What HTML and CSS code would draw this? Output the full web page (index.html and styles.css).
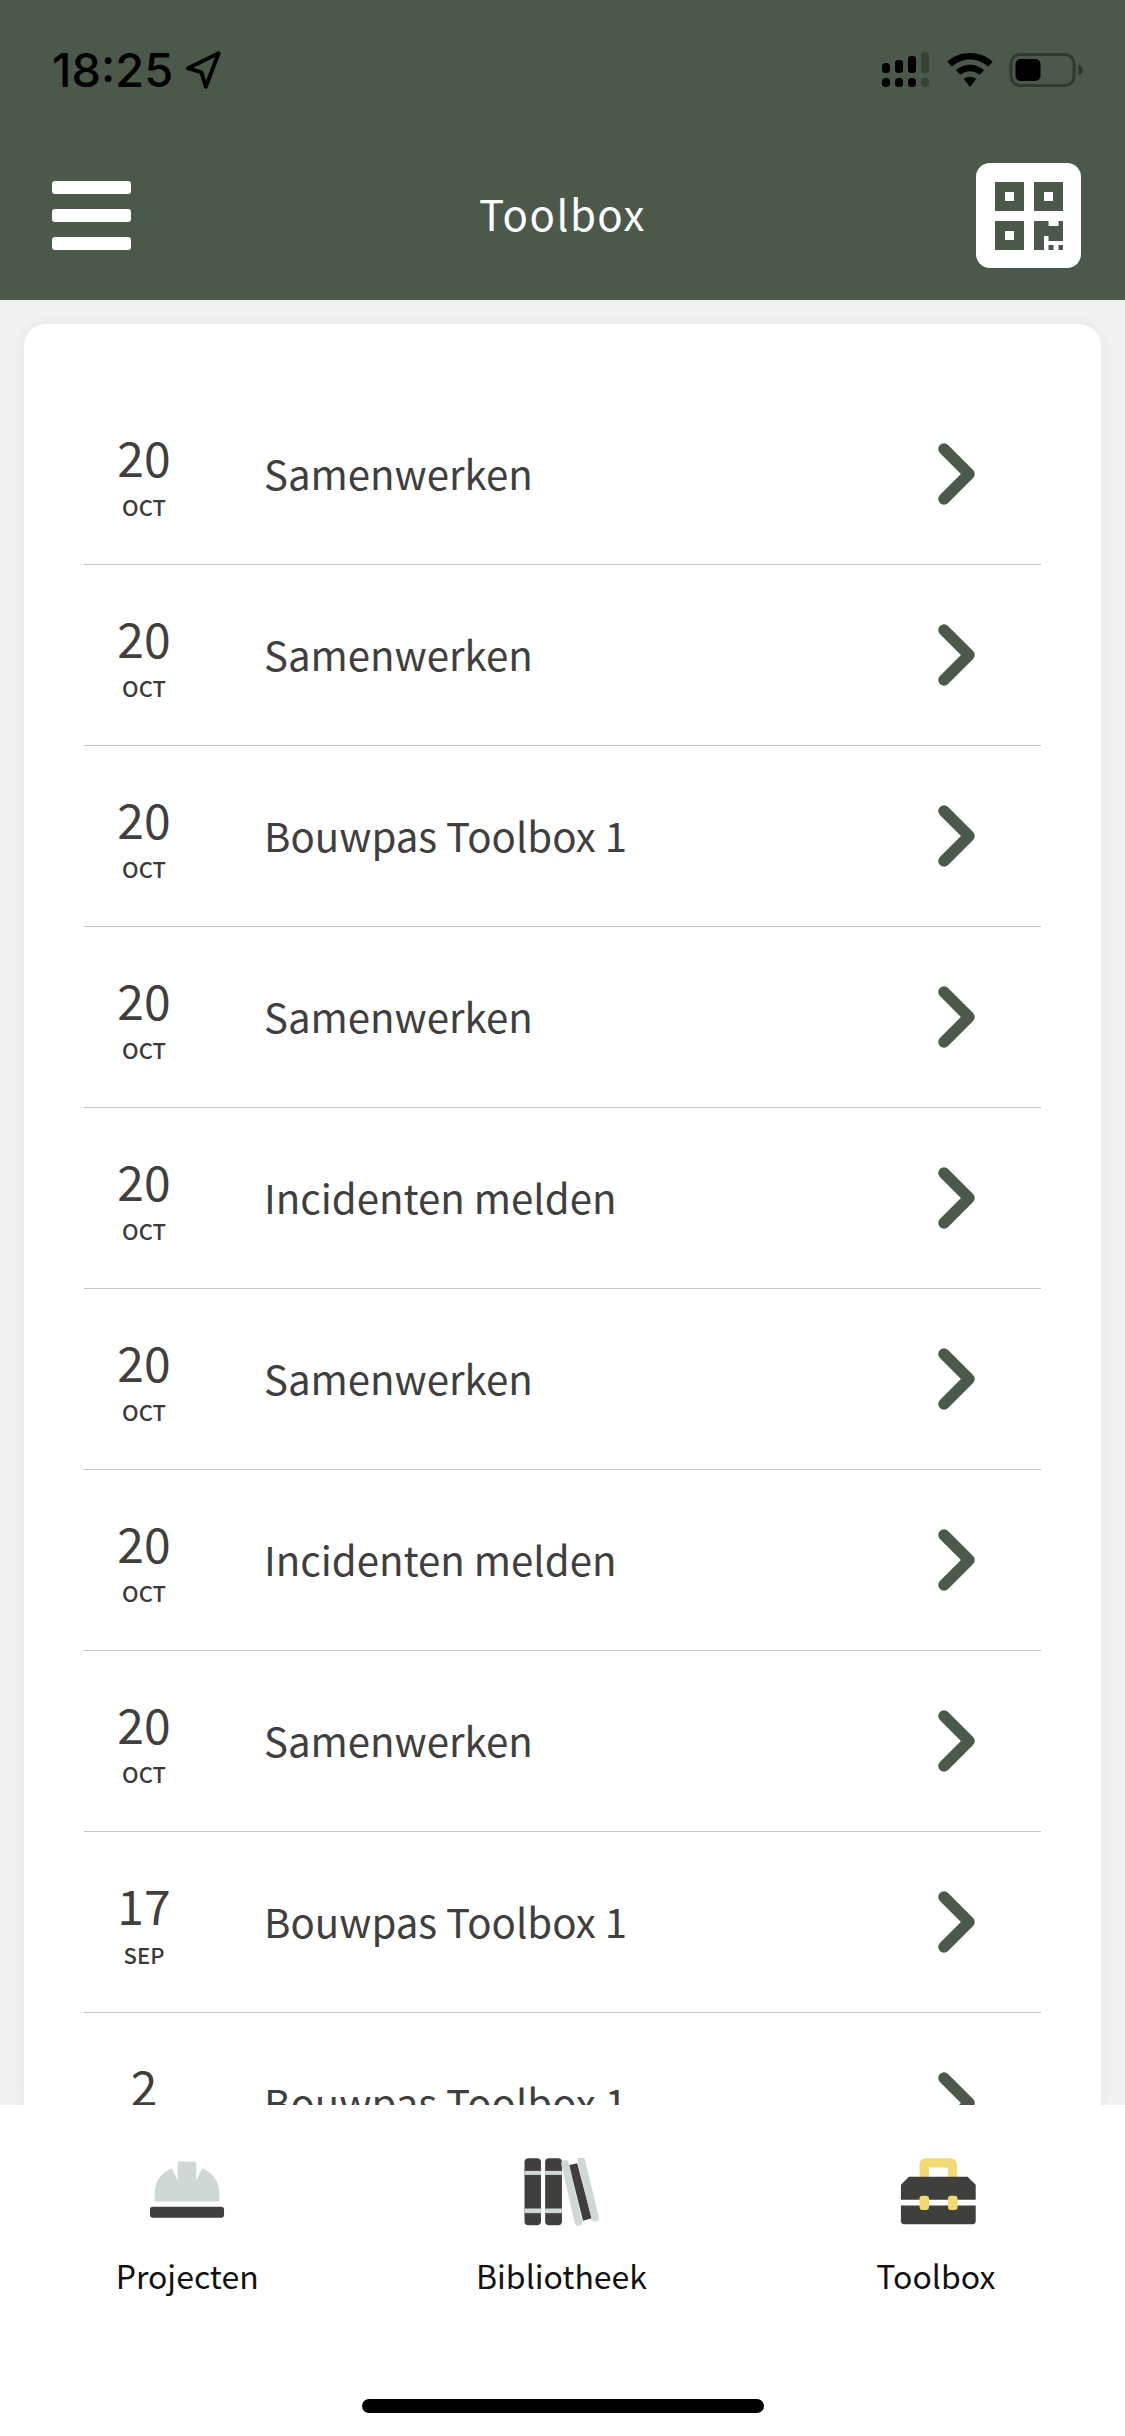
FILE: index.html
```html
<!DOCTYPE html>
<html lang="nl">
<head>
<meta charset="utf-8">
<title>Toolbox</title>
<link rel="stylesheet" href="styles.css">
</head>
<body>
<div class="app">
  <header class="header">
    <div class="status">
      <div class="status-left">
        <span class="time">18:25</span>
        <svg class="loc" viewBox="0 0 32 34"><path d="M30 2 2.500 15.500 14.500 18.800 18.500 32Z" fill="none" stroke="#000" stroke-width="3.500" stroke-linejoin="round"/></svg>
      </div>
      <div class="status-right">
        <svg class="signal" viewBox="0 0 48 36"><rect x="0" y="11" width="8" height="10" rx="3.500"/><rect x="13" y="8" width="8" height="13" rx="3"/><rect x="26" y="4" width="8" height="17" rx="3"/><rect x="39" y="0" width="8" height="21" rx="3" opacity=".25"/><rect x="0" y="26" width="8" height="9" rx="3.500"/><rect x="13" y="26" width="8" height="9" rx="3.500"/><rect x="26" y="26" width="8" height="9" rx="3.500"/><rect x="39" y="26" width="8" height="9" rx="3.500" opacity=".25"/></svg>
        <svg class="wifi" viewBox="0 0 46 34"><path d="M23 0C14.500 0 6.800 3.200 1 8.500L5.500 13C10.200 8.800 16.300 6.200 23 6.200S35.800 8.800 40.500 13L45 8.500C39.200 3.200 31.500 0 23 0Z"/><path d="M23 11.500C17.700 11.500 13 13.500 9.300 16.800L13.700 21.200C16.200 19 19.400 17.700 23 17.700S29.800 19 32.300 21.200L36.700 16.800C33 13.500 28.300 11.500 23 11.500Z"/><path d="M23 23C20.600 23 18.700 23.800 17 25.200L23 33 29 25.200C27.300 23.800 25.400 23 23 23Z"/></svg>
        <svg class="battery" viewBox="0 0 74 34"><rect x="1.500" y="1.500" width="63" height="31" rx="9" fill="none" stroke="#000" stroke-opacity=".35" stroke-width="3"/><rect x="6" y="6" width="25" height="22" rx="5"/><path d="M69 11.500C71.500 12.500 73 14.500 73 17S71.500 21.500 69 22.500Z" opacity=".4"/></svg>
      </div>
    </div>
    <div class="navbar">
      <div class="burger"><span></span><span></span><span></span></div>
      <h1 class="title">Toolbox</h1>
      <div class="qr">
        <svg viewBox="0 0 68 68" width="68" height="68"><path fill-rule="evenodd" fill="#4a5949" d="M0 0H29V29H0ZM10 10V19H19V10ZM39 0H68V29H39ZM49 10V19H58V10ZM0 39H29V68H0ZM10 49V58H19V49Z"/><path fill="#4a5949" d="M39 39H53.500V44H63.500V39H68V59H53.500V54H49V68H39ZM53.500 63H58.500V68H53.500ZM63.500 63H68V68H63.500Z"/></svg>
      </div>
    </div>
  </header>
  <main class="main">
    <section class="card">
      <ul class="list">
        <li class="row"><div class="date"><span class="day">20</span><span class="month">OCT</span></div><span class="name">Samenwerken</span><svg class="chev" viewBox="0 0 38 62"><path d="M6 6 31 31 6 56" /></svg></li>
        <li class="row"><div class="date"><span class="day">20</span><span class="month">OCT</span></div><span class="name">Samenwerken</span><svg class="chev" viewBox="0 0 38 62"><path d="M6 6 31 31 6 56" /></svg></li>
        <li class="row"><div class="date"><span class="day">20</span><span class="month">OCT</span></div><span class="name">Bouwpas Toolbox 1</span><svg class="chev" viewBox="0 0 38 62"><path d="M6 6 31 31 6 56" /></svg></li>
        <li class="row"><div class="date"><span class="day">20</span><span class="month">OCT</span></div><span class="name">Samenwerken</span><svg class="chev" viewBox="0 0 38 62"><path d="M6 6 31 31 6 56" /></svg></li>
        <li class="row"><div class="date"><span class="day">20</span><span class="month">OCT</span></div><span class="name">Incidenten melden</span><svg class="chev" viewBox="0 0 38 62"><path d="M6 6 31 31 6 56" /></svg></li>
        <li class="row"><div class="date"><span class="day">20</span><span class="month">OCT</span></div><span class="name">Samenwerken</span><svg class="chev" viewBox="0 0 38 62"><path d="M6 6 31 31 6 56" /></svg></li>
        <li class="row"><div class="date"><span class="day">20</span><span class="month">OCT</span></div><span class="name">Incidenten melden</span><svg class="chev" viewBox="0 0 38 62"><path d="M6 6 31 31 6 56" /></svg></li>
        <li class="row"><div class="date"><span class="day">20</span><span class="month">OCT</span></div><span class="name">Samenwerken</span><svg class="chev" viewBox="0 0 38 62"><path d="M6 6 31 31 6 56" /></svg></li>
        <li class="row"><div class="date"><span class="day">17</span><span class="month">SEP</span></div><span class="name">Bouwpas Toolbox 1</span><svg class="chev" viewBox="0 0 38 62"><path d="M6 6 31 31 6 56" /></svg></li>
        <li class="row"><div class="date"><span class="day">2</span><span class="month">SEP</span></div><span class="name">Bouwpas Toolbox 1</span><svg class="chev" viewBox="0 0 38 62"><path d="M6 6 31 31 6 56" /></svg></li>
      </ul>
    </section>
  </main>
  <nav class="tabbar">
    <div class="tabs">
      <div class="tab">
        <svg class="tab-icon" viewBox="0 0 76 68"><path fill="#cfd9d4" d="M30 5C30 3.500 31 3 32 3H44C45 3 46 3.500 46 5V19L51 9C60 12 66 20 66 31V37.500H10V31C10 20 16 12 25 9L30 19Z"/><rect x="6" y="42" width="64" height="9.500" rx="2.500" fill="#3f3f3d"/></svg>
        <span class="tab-label">Projecten</span>
      </div>
      <div class="tab">
        <svg class="tab-icon" viewBox="-2 0 76 68"><rect x="4.500" y="0" width="14.200" height="58" rx="3.500" fill="#3f3f3d"/><rect x="22.300" y="0" width="14.500" height="58" rx="3.500" fill="#3f3f3d"/><rect x="4.500" y="11" width="14.200" height="3.500" fill="#cfd9d4"/><rect x="22.300" y="11" width="14.500" height="3.500" fill="#cfd9d4"/><rect x="4.500" y="43.500" width="14.200" height="4" fill="#cfd9d4"/><rect x="22.300" y="43.500" width="14.500" height="4" fill="#cfd9d4"/><path d="M43 6 50 4.500 62.500 52 55 54Z" fill="#3f3f3d"/><path d="M39.500 5 51 55M53.500 2 65.500 51.500" stroke="#cfd9d4" stroke-width="6.500" stroke-linecap="round" fill="none"/></svg>
        <span class="tab-label">Bibliotheek</span>
      </div>
      <div class="tab">
        <svg class="tab-icon" viewBox="-2 0 76 68"><path d="M21.800 17V6C21.800 2 24 0 28 0H48C52 0 54.200 2 54.200 6V17H46.300V8H29.900V17Z" fill="#f2d974"/><path d="M12.700 16H63.300L70.300 23V36H5.700V23Z" fill="#3f3f3d"/><path d="M5.700 41H70.300V54.500C70.300 56 69.300 57 67.800 57H8.200C6.700 57 5.700 56 5.700 54.500Z" fill="#3f3f3d"/><rect x="21.800" y="32.400" width="8.200" height="12.400" rx="2.500" fill="#f2d974"/><rect x="46.300" y="32.400" width="8.300" height="12.400" rx="2.500" fill="#f2d974"/></svg>
        <span class="tab-label">Toolbox</span>
      </div>
    </div>
    <div class="home"></div>
  </nav>
</div>
</body>
</html>
```
FILE: styles.css
```css
* { box-sizing: border-box; margin: 0; padding: 0; }
html, body { width: 1125px; height: 2436px; overflow: hidden; background: #f1f1f1; }
body { font-family: "Noto Sans CJK SC", "Noto Sans", sans-serif; color: #3a3a3a; }
.app { width: 1125px; height: 2436px; display: flex; flex-direction: column; }

.header { height: 300px; background: #4a5949; flex: none; }
.status { height: 132px; padding: 46px 41px 0 52px; display: flex; justify-content: space-between; align-items: flex-start; }
.status-left { display: flex; align-items: center; gap: 12px; }
.time { font-family: Inter, "Liberation Sans", sans-serif; font-size: 47px; font-weight: 500; line-height: 48px; color: #000; }
.loc { width: 36px; height: 38px; }
.status-right { display: flex; align-items: center; padding-top: 6px; }
.signal { width: 48px; height: 36px; margin-right: 16px; }
.wifi { width: 48px; height: 35px; margin-right: 15px; }
.battery { width: 75px; height: 34px; }

.navbar { height: 168px; padding: 0 44px 0 52px; display: flex; align-items: flex-start; justify-content: space-between; position: relative; }
.burger { margin-top: 49px; width: 79px; display: flex; flex-direction: column; gap: 15px; }
.burger span { display: block; width: 79px; height: 13px; border-radius: 3px; background: #fff; }
.title { position: absolute; left: 0; right: 0; top: 53px; text-align: center; color: #fff; font-family: "Noto Sans CJK SC", sans-serif; font-size: 42px; font-weight: 400; letter-spacing: 1.500px; line-height: 56px; }
.qr { width: 105px; height: 105px; margin-top: 31px; background: #fff; border-radius: 14px; display: flex; align-items: center; justify-content: center; }

.main { flex: 1; min-height: 0; padding: 24px 24px 0; overflow: hidden; }
.card { background: #fff; border-radius: 22px 22px 0 0; padding: 60px 60px 0 60px; height: 100%; overflow: hidden; box-shadow: 0 0 14px rgba(0,0,0,.05); }
.list { list-style: none; }
.row { height: 181px; border-bottom: 1px solid #c4c4c6; display: flex; align-items: center; }
.date { width: 120px; flex: none; display: flex; flex-direction: column; align-items: center; gap: 12px; margin-right: 60px; }
.day { font-size: 48px; font-weight: 400; line-height: 52px; color: #3f3f3d; }
.month { font-size: 22px; font-weight: 500; line-height: 24px; color: #3a3a3a; }
.name { flex: 1; font-size: 40.200px; font-weight: 400; line-height: 54px; color: #3f3f3f; position: relative; top: -1px; }
.chev { width: 38px; height: 64px; margin-right: 65px; flex: none; }
.chev path { fill: none; stroke: #4a5949; stroke-width: 11.500; stroke-linecap: round; stroke-linejoin: round; }

.tabbar { height: 331px; flex: none; background: #fff; display: flex; flex-direction: column; align-items: center; }
.tabs { width: 1125px; height: 294px; display: grid; grid-template-columns: repeat(3, 1fr); padding: 53px 2px 0 0; }
.tab { display: flex; flex-direction: column; align-items: center; gap: 15px; }
.tab-icon { width: 88px; height: 79px; }
.tab-label { font-size: 32px; font-weight: 400; line-height: 46px; color: #111; }
.home { width: 402px; height: 14px; border-radius: 7px; background: #000; }
```
